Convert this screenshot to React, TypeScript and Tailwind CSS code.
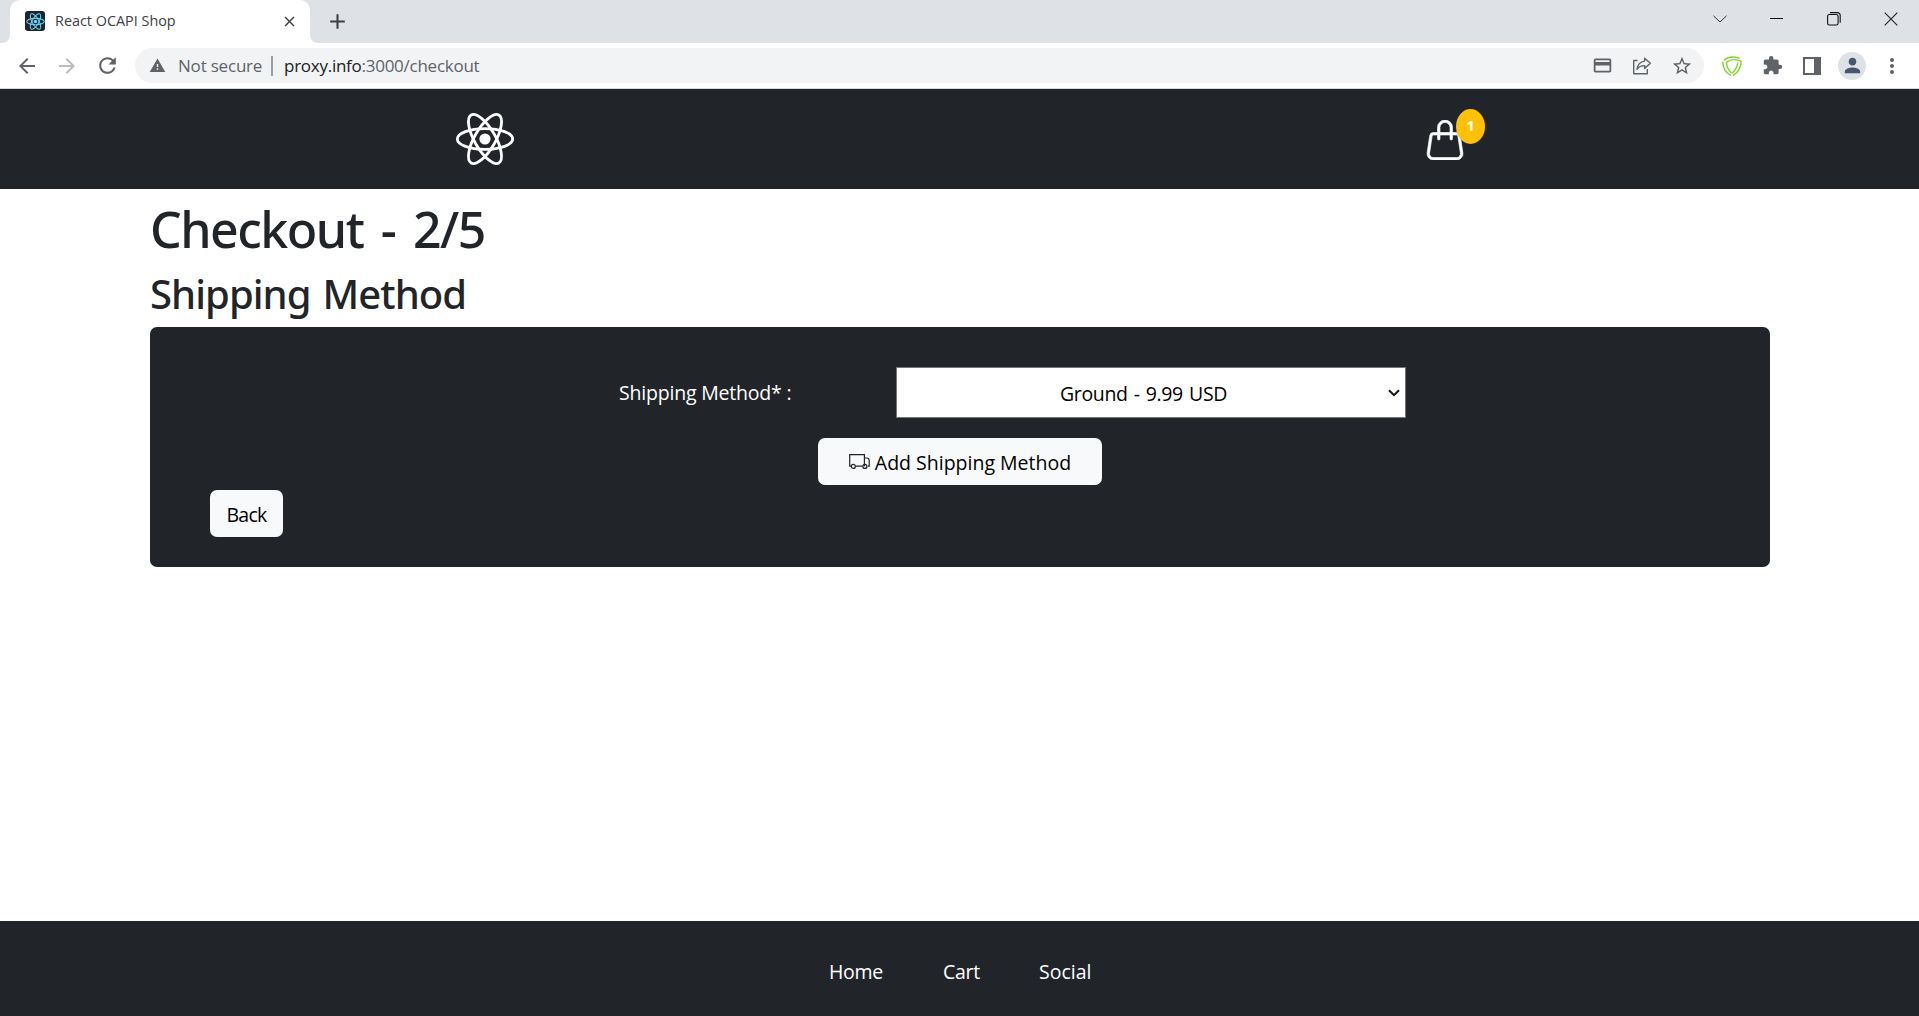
import React from "react";
import {
  MdAdd,
  MdArrowBack,
  MdArrowForward,
  MdClose,
  MdExtension,
  MdMoreVert,
  MdOutlineCreditCard,
  MdPerson,
  MdRefresh,
  MdStarBorder,
  MdWarning,
} from "react-icons/md";
import { BsHandbag } from "react-icons/bs";

function Atom({ className, stroke }: { className: string; stroke: number }) {
  return (
    <svg viewBox="-30 -30 60 60" className={className} fill="none" stroke="currentColor" strokeWidth={stroke}>
      <ellipse rx="27.7" ry="10.4" />
      <ellipse rx="27.7" ry="10.4" transform="rotate(60)" />
      <ellipse rx="27.7" ry="10.4" transform="rotate(120)" />
      <circle r="5.6" fill="currentColor" stroke="none" />
    </svg>
  );
}

function Cell({ children }: { children: React.ReactNode }) {
  return <div className="flex h-full w-10 shrink-0 items-center justify-center">{children}</div>;
}

function ShareIcon() {
  return (
    <svg viewBox="0 0 20 20" className="size-5" fill="none" stroke="#5f6368" strokeWidth="1.4" strokeLinejoin="round">
      <path d="M5.5 4.5H1.7v13.3h13.6V13" />
      <path d="M12.6 2.2 18.4 7.3l-5.8 5.1V9.6c-3.6 0-5.9 1.1-7.6 3.7.6-4.6 3-7.6 7.6-8.2z" />
    </svg>
  );
}

function ShieldIcon() {
  return (
    <svg viewBox="0 0 20 20" className="size-5" fill="none" stroke="#84d62c" strokeWidth="1.4" strokeLinecap="round">
      <path d="M2.200 4C6 .7 12 .4 17 2.200" />
      <path d="M4.500 6.200C8.500 3.300 14 3 19.200 5.400 19 11 16.200 16 11.500 19.200" />
      <path d="M15.600 7.200c-.5 4-2.400 7.300-5.400 9.800" />
      <path d="M.8 6.200C1 12 3.700 16.800 8.500 19.200" />
      <path d="M4.500 6.200c.1 4.300 1.700 7.700 4.500 10.200" />
    </svg>
  );
}

function BrowserChrome() {
  return (
    <div className="shrink-0 border-b border-[#d5d7da] bg-white">
      <div className="flex h-[43px] bg-[#dee1e6]">
        <div className="flex w-[10px] bg-white">
          <div className="flex-1 rounded-br-lg bg-[#dee1e6]" />
        </div>
        <div className="flex bg-[#dee1e6]">
          <div className="flex w-[300px] items-center rounded-t-[10px] bg-white pr-[12px] pb-px pl-[15px]">
            <div className="flex size-5 items-center justify-center rounded-[3px] bg-[#20232a] text-[#61dafb]">
              <Atom className="size-[19px]" stroke={3.2} />
            </div>
            <span className="ml-[10px] flex-1 whitespace-nowrap pb-px text-[14.400px] leading-5 text-[#3c4043]">
              React OCAPI Shop
            </span>
            <MdClose className="size-[17px] text-[#3c4043]" />
          </div>
        </div>
        <div className="w-[10px] bg-white">
          <div className="h-full rounded-bl-lg bg-[#dee1e6]" />
        </div>
        <div className="ml-[5px] flex items-center">
          <MdAdd className="size-[25px] text-[#3c4043]" />
        </div>
        <div className="ml-auto flex h-[37px] items-center text-black">
          <div className="flex w-[57px] justify-center">
            <svg viewBox="0 0 14 8" className="h-2 w-[14px]" fill="none" stroke="#333">
              <path d="m.5.8 6.500 6.200 6.500-6.200" />
            </svg>
          </div>
          <div className="flex w-[57px] justify-center">
            <div className="h-px w-[13px] bg-black" />
          </div>
          <div className="flex w-[57px] justify-center">
            <svg viewBox="0 0 14 14" className="size-[14px]" fill="none" stroke="#111" strokeWidth="1.100">
              <rect x=".6" y="2.500" width="10.500" height="10.500" rx="1.800" />
              <path d="M3 .6h7.500a2.700 2.700 0 0 1 2.700 2.700v7.500" />
            </svg>
          </div>
          <div className="flex w-[57px] justify-center">
            <svg viewBox="0 0 14 14" className="size-[14px]" fill="none" stroke="#222" strokeWidth="1.100">
              <path d="m.7.7 12.600 12.600m0-12.600L.7 13.300" />
            </svg>
          </div>
        </div>
      </div>

      <div className="flex h-[45px] items-center pr-[7px] pl-[7px] text-[#5f6368]">
        <Cell><MdArrowBack className="size-6" /></Cell>
        <Cell><MdArrowForward className="size-6 text-[#babcbe]" /></Cell>
        <Cell><MdRefresh className="size-[25px]" /></Cell>
        <div className="ml-[8px] flex h-[35px] flex-1 items-center rounded-full bg-[#f1f3f4] pr-[2px] pl-[14px] text-[17px] leading-6">
          <MdWarning className="size-[17px]" />
          <span className="ml-[12px] w-[83px] whitespace-nowrap tracking-[-0.200px]">Not secure</span>
          <span className="ml-[10px] h-5 w-[2px] bg-[#9a9da1]" />
          <span className="ml-[11px] whitespace-nowrap tracking-[-0.260px]">
            <span className="text-[#202124]">proxy.info</span>:3000/checkout
          </span>
          <div className="ml-auto flex items-center">
            <Cell><MdOutlineCreditCard className="size-[21px]" /></Cell>
            <Cell><ShareIcon /></Cell>
            <Cell><MdStarBorder className="size-[22px]" /></Cell>
          </div>
        </div>
        <div className="ml-2 flex items-center">
          <Cell><ShieldIcon /></Cell>
          <Cell><MdExtension className="size-[21px]" /></Cell>
          <Cell><div className="h-[18px] w-[18px] border-2 border-r-[7px] border-[#5f6368]" /></Cell>
          <Cell>
            <div className="flex size-7 items-center justify-center rounded-full bg-[#dee1e6]">
              <MdPerson className="size-[23px] text-[#4a5670]" />
            </div>
          </Cell>
          <Cell><MdMoreVert className="size-6" /></Cell>
        </div>
      </div>
    </div>
  );
}

function Truck() {
  return (
    <svg viewBox="0 0 21 17" className="h-[17px] w-[21px]" fill="none" stroke="#212529" strokeWidth="1.200">
      <path d="M2.200 13.200H.7V1.600h14.700v11.600M6.400 13.200h7" />
      <path d="M15.400 5h2.200a2.600 2.600 0 0 1 2.600 2.600v5.600h-1.400" />
      <circle cx="4.300" cy="13.400" r="2" />
      <circle cx="15.900" cy="13.400" r="2" />
    </svg>
  );
}

export default function App() {
  return (
    <div className="flex h-[1016px] w-[1919px] flex-col overflow-hidden bg-white font-['Open_Sans',sans-serif] text-[19.500px] leading-[30px] text-[#212529]">
      <BrowserChrome />

      <header className="flex h-[100px] shrink-0 items-center justify-between bg-[#212529] pr-[454px] pl-[455px] text-white">
        <Atom className="size-[60px]" stroke={2.8} />
        <div className="relative mt-[2px]">
          <BsHandbag className="size-10" strokeWidth={0.25} />
          <span className="absolute -top-[11px] left-[31px] flex h-[35px] w-[29px] items-center justify-center rounded-[50%] bg-[#ffc107] pb-[2px] text-[15px] leading-none font-bold">
            1
          </span>
        </div>
      </header>

      <main className="flex-1 px-[150px] pt-[10px]">
        <h1 className="mb-[10px] pt-px font-['Noto_Sans',sans-serif] text-[50px] leading-[59px] font-medium tracking-[-1.500px] [word-spacing:6px]">
          Checkout - 2/5
        </h1>
        <h2 className="mb-[10px] pt-px font-['Noto_Sans',sans-serif] text-[40px] leading-[47px] font-medium tracking-[-0.950px] [word-spacing:2.500px]">
          Shipping Method
        </h2>
        <section className="flex h-[240px] w-[1620px] flex-col rounded-[7px] bg-[#212529] px-[60px] pt-10">
          <div className="flex items-center pl-[409px]">
            <label className="w-[277px] pt-px tracking-[-0.200px] text-white">Shipping Method* :</label>
            <div className="flex h-[51px] w-[510px] items-center border border-[#767676] bg-white pr-[5px] text-black">
              <span className="flex-1 pt-[2px] pl-[2px] text-center tracking-[-0.350px] [word-spacing:1.400px]">
                Ground - 9.99 USD
              </span>
              <svg viewBox="0 0 12 8" className="h-2 w-3" fill="none" stroke="#111" strokeWidth="2">
                <path d="m1 1.200 5 5 5-5" />
              </svg>
            </div>
          </div>
          <button className="mt-5 flex h-[47px] w-[284px] items-center justify-center gap-[5px] self-center rounded-[7px] bg-[#f8f9fa] text-black">
            <Truck />
            <span className="pt-[3px]">Add Shipping Method</span>
          </button>
          <button className="mt-[5px] h-[47px] w-[73px] rounded-[7px] bg-[#f8f9fa] pt-[3px] tracking-[-0.700px] text-black">
            Back
          </button>
        </section>
      </main>

      <footer className="flex h-[95px] shrink-0 gap-[60px] bg-[#212529] pt-[36px] pl-[829px] text-white">
        <a className="w-[54px] tracking-[-0.300px]">Home</a>
        <a className="w-[36px] tracking-[-0.300px]">Cart</a>
        <a>Social</a>
      </footer>
    </div>
  );
}
